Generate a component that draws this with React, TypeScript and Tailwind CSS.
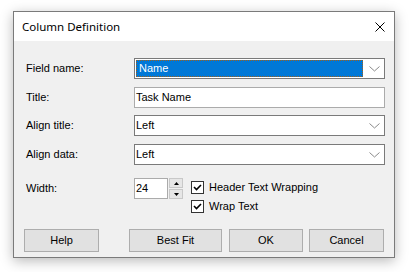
import React from "react";

const ui = "font-['Liberation_Sans',Arial,sans-serif] text-[11px] text-black leading-none";

function Chevron() {
  return (
    <div className="w-[20px] h-full flex items-center justify-center">
      <svg width="11" height="6" viewBox="0 0 11 6">
        <path d="M0.5 0.5 L5.5 5 L10.5 0.5" fill="none" stroke="#8a8a8a" strokeWidth="1" />
      </svg>
    </div>
  );
}

function Combo({ value, focused }: { value: string; focused?: boolean }) {
  return (
    <div className="flex-1 h-[21px] border border-[#7a7a7a] bg-white flex items-stretch">
      {focused ? (
        <div className="flex-1 p-[1px] flex">
          <div className="flex-1 border border-dotted border-[#a0601a] bg-[#0078d7] flex items-center pl-[2px] text-white">
            {value}
          </div>
        </div>
      ) : (
        <div className="flex-1 flex items-center pl-[1px]">{value}</div>
      )}
      <Chevron />
    </div>
  );
}

function Label({ children }: { children: React.ReactNode }) {
  return <div className="w-[108px] shrink-0">{children}</div>;
}

function Check({ label }: { label: string }) {
  return (
    <div className="flex items-center">
      <div className="w-[13px] h-[13px] border border-[#333333] bg-white flex items-center justify-center">
        <svg width="11" height="11" viewBox="0 0 11 11">
          <path d="M2 5 L4.5 7.5 L9 3" fill="none" stroke="#000" strokeWidth="1.6" />
        </svg>
      </div>
      <span className="ml-[5px]">{label}</span>
    </div>
  );
}

function Btn({ label, cls }: { label: string; cls: string }) {
  return (
    <div className={`h-[23px] border border-[#adadad] bg-[#e1e1e1] flex items-center justify-center ${cls}`}>
      {label}
    </div>
  );
}

export default function App() {
  return (
    <div className={`w-[409px] h-[272px] bg-white pt-[11px] pl-[13px] ${ui}`}>
      <div className="w-[382px] h-[247px] border border-[#7a7a7a] bg-[#f0f0f0] flex flex-col shadow-[0_3px_12px_rgba(0,0,0,0.28)]">
        <div className="h-[29px] bg-white flex items-center justify-between pl-[8px] pr-[9px]">
          <span className="font-['Segoe_UI','Noto_Sans',sans-serif] text-[11.5px]">Column Definition</span>
          <svg width="10" height="10" viewBox="0 0 10 10">
            <path d="M0.5 0.5 L9.5 9.5 M9.5 0.5 L0.5 9.5" stroke="#000" strokeWidth="1" />
          </svg>
        </div>
        <div className="flex-1 flex flex-col pl-[10px] pr-[9px] pt-[17px]">
          <div className="flex items-center pl-[2px]">
            <Label>Field name:</Label>
            <Combo value="Name" focused />
          </div>
          <div className="flex items-center pl-[2px] mt-[8px]">
            <Label>Title:</Label>
            <div className="flex-1 h-[21px] border border-[#ababab] bg-white flex items-center pl-[1px]">Task Name</div>
          </div>
          <div className="flex items-center pl-[2px] mt-[7px]">
            <Label>Align title:</Label>
            <Combo value="Left" />
          </div>
          <div className="flex items-center pl-[2px] mt-[8px]">
            <Label>Align data:</Label>
            <Combo value="Left" />
          </div>
          <div className="flex items-start pl-[2px] mt-[13px]">
            <div className="w-[108px] h-[21px] flex items-center">Width:</div>
            <div className="w-[34px] h-[21px] border border-[#ababab] bg-white flex items-center pl-[1px]">24</div>
            <div className="ml-[1px] w-[14px] h-[21px] flex flex-col gap-[1px]">
              <div className="h-[10px] border border-[#c8c8c8] bg-[#e6e6e6] flex items-center justify-center">
                <svg width="5" height="3" viewBox="0 0 5 3"><path d="M2.5 0 L5 3 L0 3 Z" fill="#000" /></svg>
              </div>
              <div className="h-[10px] border border-[#c8c8c8] bg-[#e6e6e6] flex items-center justify-center">
                <svg width="5" height="3" viewBox="0 0 5 3"><path d="M0 0 L5 0 L2.5 3 Z" fill="#000" /></svg>
              </div>
            </div>
            <div className="ml-[8px] mt-[3px] flex flex-col gap-[6px]">
              <Check label="Header Text Wrapping" />
              <Check label="Wrap Text" />
            </div>
          </div>
          <div className="flex mt-[16px]">
            <Btn label="Help" cls="w-[75px]" />
            <Btn label="Best Fit" cls="w-[93px] ml-[30px]" />
            <Btn label="OK" cls="w-[74px] ml-[7px]" />
            <Btn label="Cancel" cls="w-[75px] ml-[6px]" />
          </div>
        </div>
      </div>
    </div>
  );
}
